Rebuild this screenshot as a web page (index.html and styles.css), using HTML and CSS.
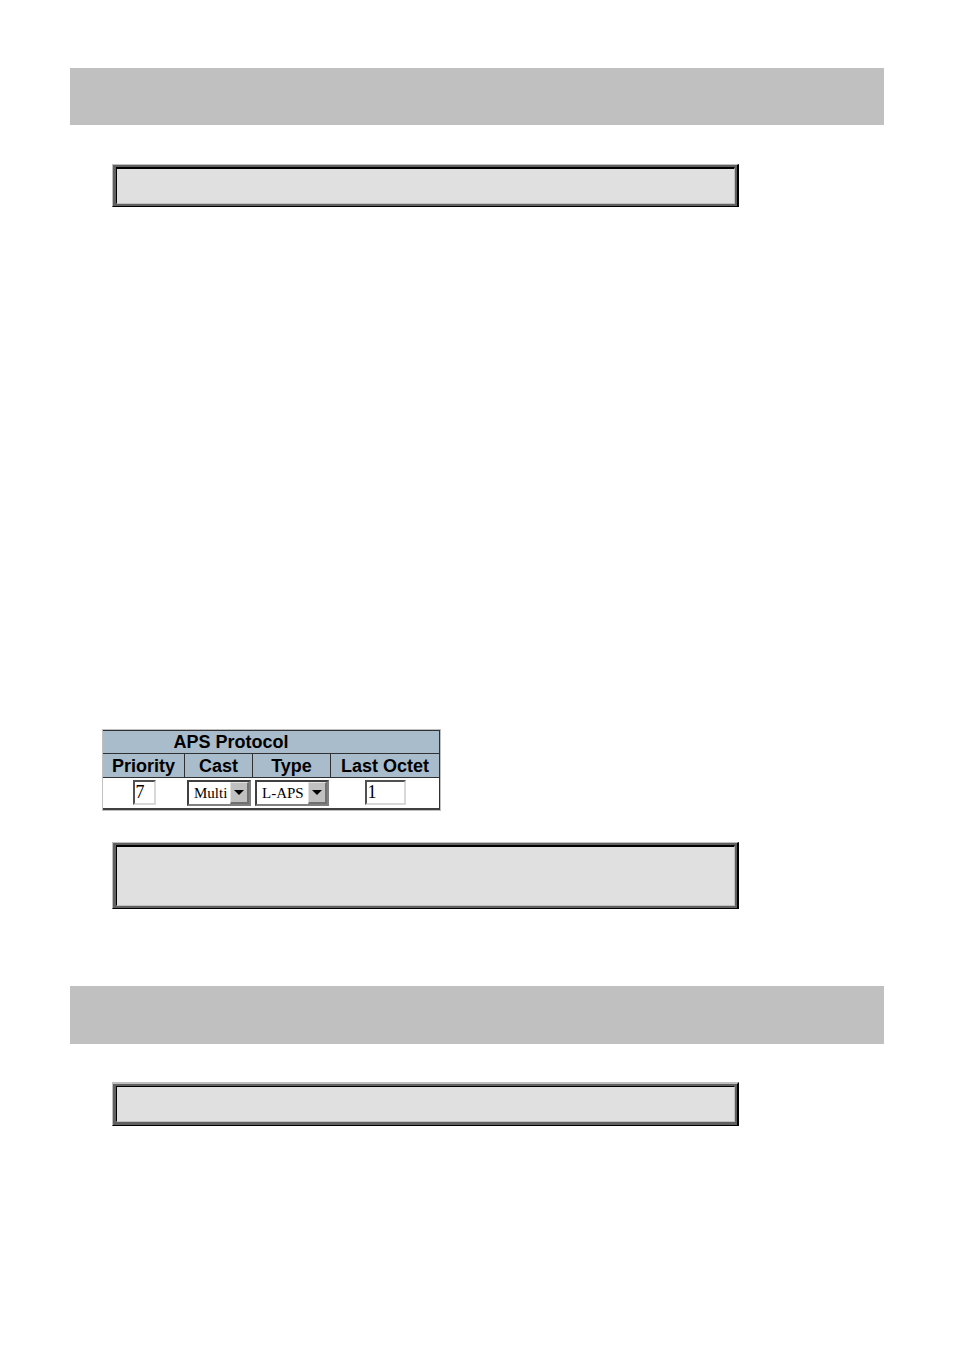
FILE: index.html
```html
<!DOCTYPE html>
<html lang="en">
<head>
<meta charset="utf-8">
<title>APS Protocol</title>
<link rel="stylesheet" href="styles.css">
</head>
<body>
<main class="page">
  <section class="section">
    <div class="band"></div>
    <div class="panel"><div class="panel-rim"><div class="panel-face"></div></div></div>
  </section>

  <section class="settings">
    <table class="aps">
      <colgroup><col class="col-priority"><col class="col-cast"><col class="col-type"><col class="col-octet"></colgroup>
      <thead>
        <tr><th class="title" colspan="4" scope="colgroup">APS Protocol</th></tr>
        <tr>
          <th scope="col" id="priority">Priority</th>
          <th scope="col" id="cast">Cast</th>
          <th scope="col" id="type">Type</th>
          <th scope="col" id="octet">Last Octet</th>
        </tr>
      </thead>
      <tbody>
        <tr>
          <td><input class="field field-short" type="text" value="7" aria-labelledby="priority"></td>
          <td>
            <div class="picker">
              <select class="select" aria-labelledby="cast"><option>Multi</option></select>
              <span class="arrow"><svg width="10" height="5" viewBox="0 0 10 5"><path d="M0 0h10L5 5z"/></svg></span>
            </div>
          </td>
          <td>
            <div class="picker">
              <select class="select" aria-labelledby="type"><option>L-APS</option></select>
              <span class="arrow"><svg width="10" height="5" viewBox="0 0 10 5"><path d="M0 0h10L5 5z"/></svg></span>
            </div>
          </td>
          <td><input class="field field-long" type="text" value="1" aria-labelledby="octet"></td>
        </tr>
      </tbody>
    </table>
    <div class="panel panel-tall"><div class="panel-rim"><div class="panel-face"></div></div></div>
  </section>

  <section class="section">
    <div class="band band-second"></div>
    <div class="panel panel-last"><div class="panel-rim"><div class="panel-face"></div></div></div>
  </section>
</main>
</body>
</html>
```
FILE: styles.css
```css
* { box-sizing: border-box; }

body {
  margin: 0;
  background: #fff;
  color: #000;
  font-family: "Liberation Sans", Arial, sans-serif;
}

.page { padding: 68px 70px 224px; }

.band {
  min-height: 57px;
  margin-bottom: 39px;
  background: #c0c0c0;
}

.band-second { min-height: 58px; margin-bottom: 38px; }

/* Bevelled panel: outer edge, grey rim, recessed face */
.panel {
  margin: 0 145px 0 42px;
  border-style: solid;
  border-width: 1px 2px 1px 1px;
  border-color: #c0c0c0 #000 #000 #c0c0c0;
}

.panel-rim {
  border: solid #606060;
  border-width: 2px 2px 2px 3px;
}

.panel-face {
  min-height: 37px;
  border-style: solid;
  border-width: 2px 1px 1px 1px;
  border-color: #000 #c0c0c0 #c0c0c0 #000;
  background: #e0e0e0;
}

.panel-tall .panel-face { min-height: 61px; }

.panel-last { border-top-width: 2px; }
.panel-last .panel-rim { border-bottom-width: 3px; }
.panel-last .panel-face { min-height: 36px; border-top-width: 1px; }

.settings { padding: 522px 0 77px; }

.aps {
  width: 339px;
  margin: 0 0 31px 32px;
  border: 1px solid #c0c0c0;
  border-spacing: 0;
  table-layout: fixed;
}

.col-priority { width: 82px; }
.col-cast { width: 68px; }
.col-type { width: 78px; }
.col-octet { width: 109px; }

.aps th {
  height: 24px;
  padding: 0;
  border-right: 1px solid #303030;
  border-bottom: 1px solid #303030;
  background: #a9bccb;
  font-size: 18px;
  line-height: 22px;
  text-align: center;
}

.aps .title {
  padding-right: 80px;
  border-top: 1px solid #303030;
}

.aps td {
  height: 32px;
  padding: 1px 0 2px;
  border-bottom: 2px solid #404040;
  text-align: center;
}

.aps td:last-child { border-right: 1px solid #303030; }

.field,
.select {
  border-style: solid;
  border-width: 2px;
  border-color: #505050 #d8d8d8 #d8d8d8 #505050;
  border-radius: 0;
  background: #fff;
  color: #000;
  font-family: "Liberation Serif", "Times New Roman", serif;
}

.field {
  display: block;
  height: 25px;
  margin: 0 auto;
  padding: 0 1px;
  font-size: 18px;
}

.field-short { width: 23px; }
.field-long { width: 41px; }

.picker {
  position: relative;
  margin: 0 2px;
}

.select {
  display: block;
  width: 100%;
  height: 26px;
  padding: 0 0 0 5px;
  border-color: #404040 #808080 #808080 #404040;
  appearance: none;
  font-size: 15px;
}

.arrow {
  position: absolute;
  top: 2px;
  right: 2px;
  bottom: 2px;
  display: flex;
  width: 19px;
  align-items: center;
  justify-content: center;
  border-style: solid;
  border-width: 1px 2px 2px 1px;
  border-color: #e0e0e0 #707070 #707070 #e0e0e0;
  background: #c0c0c0;
  pointer-events: none;
}
```
